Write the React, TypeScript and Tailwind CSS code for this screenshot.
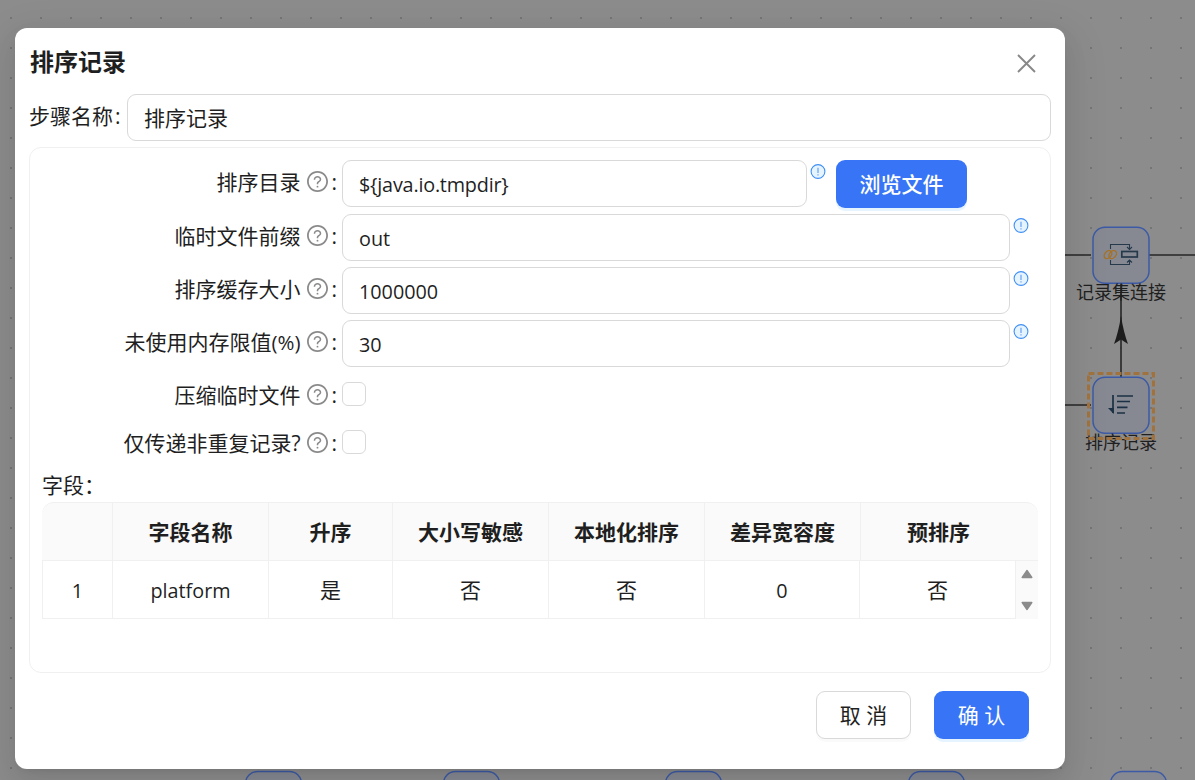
import React from "react";

interface FieldRow {
  name: string;
  asc: string;
  caseSensitive: string;
  localized: string;
  tolerance: string;
  presorted: string;
}

const columns = ["", "字段名称", "升序", "大小写敏感", "本地化排序", "差异宽容度", "预排序"];

const rows: FieldRow[] = [
  { name: "platform", asc: "是", caseSensitive: "否", localized: "否", tolerance: "0", presorted: "否" },
];

const bottomNodes = [245.5, 443.5, 665.5, 908.5, 1110.5];

function FlowCanvas() {
  return (
    <svg
      className="absolute inset-0"
      width="1195"
      height="780"
      viewBox="0 0 1195 780"
      fill="none"
    >
      <defs>
        <pattern id="grid" x="10" y="17" width="30" height="30" patternUnits="userSpaceOnUse">
          <rect width="2" height="2" fill="#757575" />
        </pattern>
      </defs>
      <rect width="1195" height="780" fill="url(#grid)" />

      {/* Edges */}
      <path d="M1060 255H1091M1149 255H1195M1060 405H1091" stroke="#262626" strokeWidth="1.6" />
      <path d="M1121 377V283" stroke="#262626" strokeWidth="1.6" />
      <path d="M1121 316Q1123.500 332 1128 344L1121 339.500L1114 344Q1118.500 332 1121 316Z" fill="#1c1c1c" />

      {/* Join node */}
      <rect x="1093" y="227.300" width="56" height="56" rx="12" fill="#868992" stroke="#3c5aa6" strokeWidth="1.500" />
      <g stroke="#26394b" strokeWidth="1.100">
        <path d="M1110.500 249V244.500H1129.500V249M1127 247l2.500 2.500l2.500-2.500" />
        <path d="M1110.500 260V264.500H1129.500V260M1127 262.500l2.500-2.500l2.500 2.500" />
        <rect x="1121.800" y="251.500" width="15.500" height="5.500" strokeWidth="1.700" />
      </g>
      <g stroke="#a8701f" strokeWidth="1.300">
        <ellipse cx="1108" cy="254.600" rx="4.500" ry="3.200" transform="rotate(-50 1108 254.600)" />
        <ellipse cx="1112.700" cy="254.600" rx="4.500" ry="3.200" transform="rotate(-50 1112.700 254.600)" />
      </g>

      {/* Sort node */}
      <rect x="1093" y="377.300" width="56" height="56" rx="12" fill="#868992" stroke="#3c5aa6" strokeWidth="1.500" />
      <g stroke="#1b3044" strokeWidth="1.700">
        <path d="M1113 395V413M1117 396H1133M1117 401.500H1130M1117 407.300H1127.500M1117 413H1125" />
      </g>
      <path d="M1108 408H1113.800V414Z" fill="#1b3044" />

      {bottomNodes.map((x) => (
        <rect key={x} x={x} y="771.500" width="56" height="56" rx="12" fill="#868992" stroke="#3c5aa6" strokeWidth="1.500" />
      ))}
    </svg>
  );
}

function HelpIcon() {
  return (
    <svg className="ml-1.5 h-[21px] w-[21px] shrink-0 text-[#8a8a8a]" viewBox="64 64 896 896" fill="currentColor">
      <path d="M512 64C264.600 64 64 264.600 64 512s200.600 448 448 448 448-200.600 448-448S759.400 64 512 64zm0 820c-205.400 0-372-166.600-372-372s166.600-372 372-372 372 166.600 372 372-166.600 372-372 372z" />
      <path d="M623.600 316.700C593.600 290.400 554 276 512 276s-81.600 14.500-111.600 40.700C369.200 344 352 380.700 352 420v7.600c0 4.400 3.600 8 8 8h48c4.400 0 8-3.600 8-8V420c0-44.100 43.100-80 96-80s96 35.900 96 80c0 31.100-22 59.600-56.100 72.700-21.200 8.100-39.200 22.300-52.100 40.900-13.100 19-19.900 41.800-19.900 64.900V620c0 4.400 3.600 8 8 8h48c4.400 0 8-3.600 8-8v-22.700a48.300 48.300 0 0130.900-44.800c59-22.700 97.100-74.700 97.100-132.500.1-39.300-17.100-76-48.300-103.300zM472 732a40 40 0 1080 0 40 40 0 10-80 0z" />
    </svg>
  );
}

function InfoMark() {
  return (
    <svg className="ml-[3px] mt-1 h-4 w-4 shrink-0" viewBox="0 0 16 16" fill="none">
      <circle cx="8" cy="7.500" r="6.900" fill="#e6f4ff" stroke="#3f8ff5" strokeWidth="1.100" />
      <path d="M8 3.800V9M8 10.200V11.500" stroke="#6fa9f5" strokeWidth="1.300" />
    </svg>
  );
}

function FormLabel({ children }: { children: React.ReactNode }) {
  return (
    <div className="flex w-[300px] shrink-0 items-center justify-end">
      <span className="pt-[2px]">{children}</span>
      <HelpIcon />
      <span className="ml-[4px] mr-[5.500px] w-[5px] pt-[2px]">:</span>
    </div>
  );
}

function InputRow({ label, value, className = "" }: { label: React.ReactNode; value: string; className?: string }) {
  return (
    <div className={`flex ${className}`}>
      <div className="-mt-[2px] flex h-[47px] items-center">
        <FormLabel>{label}</FormLabel>
      </div>
      <div className="flex h-[47px] w-[668px] items-center rounded-[9px] border border-[#d9d9d9] px-4 pt-[2px] text-[19.800px]">
        {value}
      </div>
      <InfoMark />
    </div>
  );
}

function CheckRow({ label, className = "" }: { label: string; className?: string }) {
  return (
    <div className={`flex h-6 items-center ${className}`}>
      <FormLabel>{label}</FormLabel>
      <div className="h-6 w-6 rounded-md border border-[#d9d9d9]" />
    </div>
  );
}

function FieldTable() {
  return (
    <div className="w-[996px]">
      <div className="grid h-[59px] grid-cols-[71px_156px_124px_156px_156px_156px_155px_22px] overflow-hidden rounded-t-xl border-y border-[#f0f0f0] bg-[#fafafa] font-bold">
        {columns.map((title, i) => (
          <div
            key={i}
            className="flex items-center justify-center border-r border-[#f0f0f0] pt-[2px] last:border-r-0"
          >
            {title}
          </div>
        ))}
      </div>
      <div className="flex">
        <div className="w-[974px]">
          {rows.map((row, i) => (
            <div
              key={row.name}
              className="grid h-[58px] grid-cols-[70px_156px_124px_156px_156px_155px_156px] border-b border-l border-[#f0f0f0] *:flex *:items-center *:justify-center *:border-r *:border-[#f0f0f0] *:pt-[2px]"
            >
              <div className="text-[19.800px]">{i + 1}</div>
              <div className="text-[19.800px]">{row.name}</div>
              <div>{row.asc}</div>
              <div>{row.caseSensitive}</div>
              <div>{row.localized}</div>
              <div className="text-[19.800px]">{row.tolerance}</div>
              <div>{row.presorted}</div>
            </div>
          ))}
        </div>
        <div className="flex h-[58px] w-[22px] flex-col items-center justify-between bg-[#fafafa] py-[8px]">
          <svg width="12" height="10" viewBox="0 0 12 10">
            <path d="M6 1.500L10.800 8.500H1.200Z" fill="#8b8b8b" stroke="#8b8b8b" strokeWidth="1.400" strokeLinejoin="round" />
          </svg>
          <svg width="12" height="10" viewBox="0 0 12 10">
            <path d="M6 8.500L10.800 1.500H1.200Z" fill="#8b8b8b" stroke="#8b8b8b" strokeWidth="1.400" strokeLinejoin="round" />
          </svg>
        </div>
      </div>
    </div>
  );
}

export default function App() {
  return (
    <div className="relative h-[780px] w-[1195px] overflow-hidden bg-[#8c8c8c] font-['Open_Sans','Noto_Sans_CJK_SC',sans-serif] text-[21px] leading-none text-[#1f1f1f]">
      <FlowCanvas />
      <div className="absolute left-[1061px] top-[283px] w-[120px] text-center text-[18px]">记录集连接</div>
      <div className="absolute left-[1061px] top-[433px] w-[120px] text-center text-[18px]">排序记录</div>
      <div className="absolute left-[1087px] top-[372px]">
        <svg width="69" height="68" viewBox="0 0 69 68" fill="none">
          <rect x="1.500" y="1.500" width="65" height="65" stroke="#a0733e" strokeWidth="3" strokeDasharray="6 3" />
        </svg>
      </div>

      {/* Dialog */}
      <div className="absolute left-[15px] top-[28px] flex h-[741px] w-[1050px] flex-col rounded-xl bg-white px-[14px] shadow-[0_9px_24px_0_rgba(0,0,0,0.08),0_4px_9px_-6px_rgba(0,0,0,0.12),0_13px_42px_12px_rgba(0,0,0,0.05)]">
        <div className="flex h-[66px] items-center justify-between pl-px pr-[14px]">
          <h1 className="pt-[1px] text-[24px] font-bold">排序记录</h1>
          <svg className="mt-[6px]" width="20" height="20" viewBox="0 0 20 20" fill="none">
            <path d="M1 1L18 18M18 1L1 18" stroke="#888" strokeWidth="1.900" />
          </svg>
        </div>

        <div className="flex h-[47px] items-center">
          <div className="-mt-[3px] w-[98px]">
            步骤名称<span className="ml-[2px]">:</span>
          </div>
          <div className="flex h-[47px] flex-1 items-center rounded-[9px] border border-[#d9d9d9] px-4 pt-[1px]">
            排序记录
          </div>
        </div>

        <div className="mt-[6px] flex h-[526px] flex-col rounded-xl border border-[#f0f0f0] px-3 pt-3">
          <div className="flex">
            <div className="-mt-[2px] flex h-[47px] items-center">
              <FormLabel>排序目录</FormLabel>
            </div>
            <div className="flex h-[47px] w-[465px] items-center rounded-[9px] border border-[#d9d9d9] px-4 pt-[2px] text-[19.800px] tracking-[-0.2px]">
              {"${java.io.tmpdir}"}
            </div>
            <InfoMark />
            <button className="ml-[10px] h-12 w-[131px] rounded-[9px] bg-[#3875f6] pt-[1px] font-medium text-white shadow-[0_3px_0_#e6f4ff]">
              浏览文件
            </button>
          </div>
          <InputRow className="mt-[6px]" label="临时文件前缀" value="out" />
          <InputRow className="mt-[6px]" label="排序缓存大小" value="1000000" />
          <InputRow
            className="mt-[6px]"
            label={<>未使用内存限值<span className="text-[20.500px]">(%)</span></>}
            value="30"
          />
          <CheckRow className="mt-[15px]" label="压缩临时文件" />
          <CheckRow className="mt-6" label="仅传递非重复记录?" />
          <div className="mb-[6px] mt-[21px] h-[21px]">字段：</div>
          <FieldTable />
        </div>

        <div className="mt-[18px] flex justify-end gap-[23px] pr-[22px]">
          <button className="h-12 w-[95px] rounded-[9px] border border-[#d9d9d9] bg-white shadow-[0_3px_0_rgba(0,0,0,0.02)]">
            取 消
          </button>
          <button className="h-12 w-[95px] rounded-[9px] bg-[#3875f6] text-white shadow-[0_3px_0_#e6f4ff]">
            确 认
          </button>
        </div>
      </div>
    </div>
  );
}
